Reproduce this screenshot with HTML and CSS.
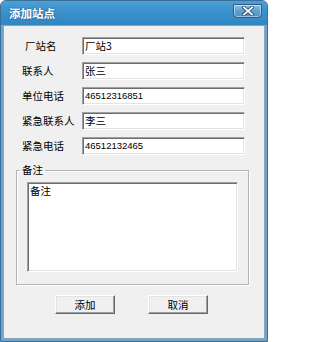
FILE: index.html
```html
<!DOCTYPE html>
<html lang="zh-CN">
<head>
<meta charset="utf-8">
<title>添加站点</title>
<link rel="stylesheet" href="styles.css">
</head>
<body>
<div class="window">
  <div class="titlebar">
    <span class="title">添加站点</span>
    <button class="close" type="button" aria-label="关闭">
      <svg width="12" height="10" viewBox="0 0 12 10"><path d="M2 1.5 L10 8.5 M10 1.5 L2 8.5" stroke="#2d4f6c" stroke-width="3.6" stroke-linecap="square"/><path d="M2 1.5 L10 8.5 M10 1.5 L2 8.5" stroke="#ffffff" stroke-width="1.8" stroke-linecap="square"/></svg>
    </button>
  </div>
  <div class="body">
    <div class="form">
      <label class="lbl first">厂站名</label><div class="field">厂站3</div>
      <label class="lbl">联系人</label><div class="field">张三</div>
      <label class="lbl">单位电话</label><div class="field num">46512316851</div>
      <label class="lbl">紧急联系人</label><div class="field">李三</div>
      <label class="lbl">紧急电话</label><div class="field num">46512132465</div>
    </div>
    <fieldset class="group">
      <legend>备注</legend>
      <div class="memo">备注</div>
    </fieldset>
    <div class="buttons">
      <button class="btn" type="button">添加</button>
      <button class="btn" type="button">取消</button>
    </div>
  </div>
</div>
</body>
</html>
```
FILE: styles.css
```css
html, body {
  margin: 0;
  padding: 0;
  background: #ffffff;
}
body {
  font-family: "Noto Sans CJK SC", "Liberation Sans", sans-serif;
}
.window {
  width: 262px;
  height: 338px;
  border: 1px solid #3d6f96;
  border-radius: 6px 6px 0 0;
  padding: 0 2px 2px 2px;
  background: #6fa6cf;
  display: flex;
  flex-direction: column;
}
.titlebar {
  height: 24px;
  flex: none;
  display: flex;
  align-items: center;
  justify-content: space-between;
  padding: 0 3px 0 5px;
  background: linear-gradient(to bottom, #4d9fd6 0%, #3a91cb 45%, #2f86c2 100%);
  margin: 0 -2px;
  border-radius: 5px 5px 0 0;
  position: relative;
}
.title {
  color: #ffffff;
  font-size: 11.5px;
  font-weight: bold;
  letter-spacing: 0;
  padding-left: 3px;
  text-shadow: 0 0 2px rgba(20, 60, 100, 0.6);
}
.close {
  align-self: flex-start;
  width: 29px;
  height: 14px;
  margin: 3px 2px 0 0;
  padding: 0;
  border: 1px solid #2f5f86;
  border-radius: 0 0 4px 4px;
  background: linear-gradient(to bottom, #8cc0e4 0%, #5da2d2 50%, #4a90c4 100%);
  box-shadow: inset 0 0 0 1px rgba(255, 255, 255, 0.45);
  display: flex;
  align-items: center;
  justify-content: center;
}
.body {
  flex: 1;
  background: #f0f0f0;
  border: 1px solid #8aa4ba;
  display: flex;
  flex-direction: column;
}
.form {
  margin-top: 11px;
  padding-left: 18px;
  display: grid;
  grid-template-columns: 60px 163px;
  row-gap: 7px;
  align-items: center;
}
.lbl {
  font-size: 10.5px;
  color: #000;
  line-height: 18px;
}
.lbl.first {
  padding-left: 3px;
}
.field {
  height: 18px;
  box-sizing: border-box;
  background: #ffffff;
  border-top: 1px solid #a0a0a0;
  border-left: 1px solid #a0a0a0;
  border-right: 1px solid #ffffff;
  border-bottom: 1px solid #ffffff;
  box-shadow: inset 1px 1px 0 #6d6d6d, inset -1px -1px 0 #e3e3e3;
  font-size: 10.5px;
  line-height: 16px;
  padding-left: 2px;
  color: #000;
}
.field.num {
  font-family: "Liberation Sans", "Noto Sans CJK SC", sans-serif;
  font-size: 9.5px;
}
.group {
  margin: 9px 15px 0 12px;
  padding: 6px 10px 12px 10px;
  border: 1px solid #b4b4b4;
  box-shadow: inset 1px 1px 0 #ffffff, 1px 1px 0 #ffffff;
  min-width: 0;
}
.group legend {
  font-size: 10.5px;
  line-height: 12px;
  padding: 0 2px;
  margin-left: -7px;
  color: #000;
}
.memo {
  height: 90px;
  box-sizing: border-box;
  background: #ffffff;
  border-top: 1px solid #a0a0a0;
  border-left: 1px solid #a0a0a0;
  border-right: 1px solid #ffffff;
  border-bottom: 1px solid #ffffff;
  box-shadow: inset 1px 1px 0 #6d6d6d, inset -1px -1px 0 #e3e3e3;
  font-size: 10.5px;
  line-height: 14px;
  padding: 1px 2px;
  color: #000;
}
.buttons {
  margin-top: 10px;
  padding-left: 51px;
  display: flex;
  gap: 33px;
}
.btn {
  width: 60px;
  height: 19px;
  padding: 0;
  box-sizing: border-box;
  background: #f0f0f0;
  border-top: 1px solid #ffffff;
  border-left: 1px solid #ffffff;
  border-right: 1px solid #696969;
  border-bottom: 1px solid #696969;
  box-shadow: inset -1px -1px 0 #a0a0a0, inset 1px 1px 0 #e3e3e3;
  font-family: "Noto Sans CJK SC", "Liberation Sans", sans-serif;
  font-size: 10.5px;
  line-height: 16px;
  color: #000;
}
```
